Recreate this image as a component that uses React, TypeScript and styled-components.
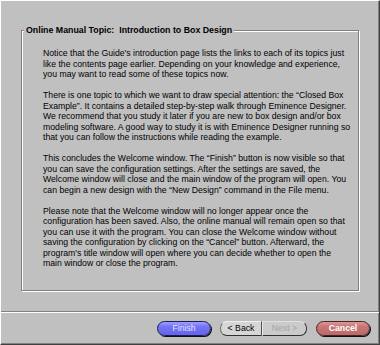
import React from "react";
import styled, { createGlobalStyle } from "styled-components";

const Global = createGlobalStyle`
  html, body { margin: 0; padding: 0; background: #c0c0c0; }
  #root { width: 380px; height: 345px; }
`;

const Window = styled.div`
  box-sizing: border-box;
  width: 380px;
  height: 345px;
  display: flex;
  flex-direction: column;
  background: #c0c0c0;
  border-top: 1px solid #ffffff;
  border-left: 1px solid #ffffff;
  border-right: 1px solid #404040;
  border-bottom: 1px solid #404040;
  box-shadow: inset -1px -1px 0 #808080;
  font-family: "Liberation Sans", Arial, sans-serif;
  color: #000;
`;

const GroupBox = styled.fieldset`
  flex: 1;
  min-height: 0;
  margin: 23px 20px 0 20px;
  padding: 0;
  border: 1px solid #808080;
  box-shadow: 1px 1px 0 #ffffff, inset 1px 1px 0 #ffffff;
`;

const Title = styled.legend`
  margin-left: 2px;
  padding: 0 2px;
  background: #c0c0c0;
  font-size: 8.8px;
  font-weight: bold;
  line-height: 12px;
  white-space: nowrap;
`;

const Body = styled.div`
  padding: 12px 0 0 21px;
`;

const Paragraph = styled.p`
  margin: 0 0 10.5px 0;
  font-size: 8.7px;
  line-height: 10.5px;
`;

const Line = styled.span`
  display: block;
  white-space: nowrap;
`;

const Separator = styled.div`
  margin-top: 20px;
  height: 0;
  border-top: 1px solid #808080;
  border-bottom: 1px solid #ffffff;
`;

const Footer = styled.div`
  height: 31px;
  box-sizing: border-box;
  display: flex;
  justify-content: flex-end;
  align-items: flex-start;
  padding: 8px 9px 0 0;
  gap: 9px;
`;

const NavPair = styled.div`
  display: flex;
`;

const BaseButton = styled.button`
  box-sizing: border-box;
  height: 15px;
  padding: 0;
  font-family: "Liberation Sans", Arial, sans-serif;
  font-size: 8.7px;
  line-height: 13px;
  cursor: default;
`;

const PillButton = styled(BaseButton)<{ $tone: "blue" | "red" }>`
  width: 54px;
  border-radius: 8px;
  border: 1px solid ${(p) => (p.$tone === "blue" ? "#1c1c50" : "#4a2222")};
  background: ${(p) =>
    p.$tone === "blue"
      ? "linear-gradient(#a0a0ff, #7474f6 35%, #6464ec)"
      : "linear-gradient(#dc9a9a, #c87676 35%, #bb6a6a)"};
  box-shadow: 1px 1px 0 #101010;
  color: ${(p) => (p.$tone === "blue" ? "#e4e4ff" : "#ffffff")};
  font-weight: ${(p) => (p.$tone === "blue" ? "normal" : "bold")};
`;

const NavButton = styled(BaseButton)<{ $side: "left" | "right"; $disabled?: boolean }>`
  width: ${(p) => (p.$side === "left" ? "42px" : "45px")};
  border-radius: ${(p) => (p.$side === "left" ? "7px 0 0 7px" : "0 7px 7px 0")};
  background: ${(p) => (p.$disabled ? "#cbcbcb" : "#d6d6d6")};
  border-top: 1px solid ${(p) => (p.$disabled ? "#e0e0e0" : "#f0f0f0")};
  border-left: 1px solid ${(p) => (p.$side === "left" ? "#707070" : "#e8e8e8")};
  border-right: 1px solid ${(p) => (p.$side === "left" ? "#505050" : "#303030")};
  border-bottom: 1px solid #303030;
  color: ${(p) => (p.$disabled ? "#a4a4a4" : "#000000")};
`;

const paragraphs: string[][] = [
  [
    "Notice that the Guide's introduction page lists the links to each of its topics just",
    "like the contents page earlier. Depending on your knowledge and experience,",
    "you may want to read some of these topics now.",
  ],
  [
    "There is one topic to which we want to draw special attention: the \u201CClosed Box",
    "Example\u201D. It contains a detailed step-by-step walk through Eminence Designer.",
    "We recommend that you study it later if you are new to box design and/or box",
    "modeling software. A good way to study it is with Eminence Designer running so",
    "that you can follow the instructions while reading the example.",
  ],
  [
    "This concludes the Welcome window. The \u201CFinish\u201D button is now visible so that",
    "you can save the configuration settings. After the settings are saved, the",
    "Welcome window will close and the main window of the program will open. You",
    "can begin a new design with the \u201CNew Design\u201D command in the File menu.",
  ],
  [
    "Please note that the Welcome window will no longer appear once the",
    "configuration has been saved. Also, the online manual will remain open so that",
    "you can use it with the program. You can close the Welcome window without",
    "saving the configuration by clicking on the \u201CCancel\u201D button. Afterward, the",
    "program's title window will open where you can decide whether to open the",
    "main window or close the program.",
  ],
];

export default function App() {
  return (
    <>
      <Global />
      <Window>
        <GroupBox>
          <Title>Online Manual Topic:&nbsp; Introduction to Box Design</Title>
          <Body>
            {paragraphs.map((lines, i) => (
              <Paragraph key={i}>
                {lines.map((l, j) => (
                  <Line key={j}>{l}</Line>
                ))}
              </Paragraph>
            ))}
          </Body>
        </GroupBox>
        <Separator />
        <Footer>
          <PillButton $tone="blue">Finish</PillButton>
          <NavPair>
            <NavButton $side="left">&lt; Back</NavButton>
            <NavButton $side="right" $disabled>
              Next &gt;
            </NavButton>
          </NavPair>
          <PillButton $tone="red">Cancel</PillButton>
        </Footer>
      </Window>
    </>
  );
}
